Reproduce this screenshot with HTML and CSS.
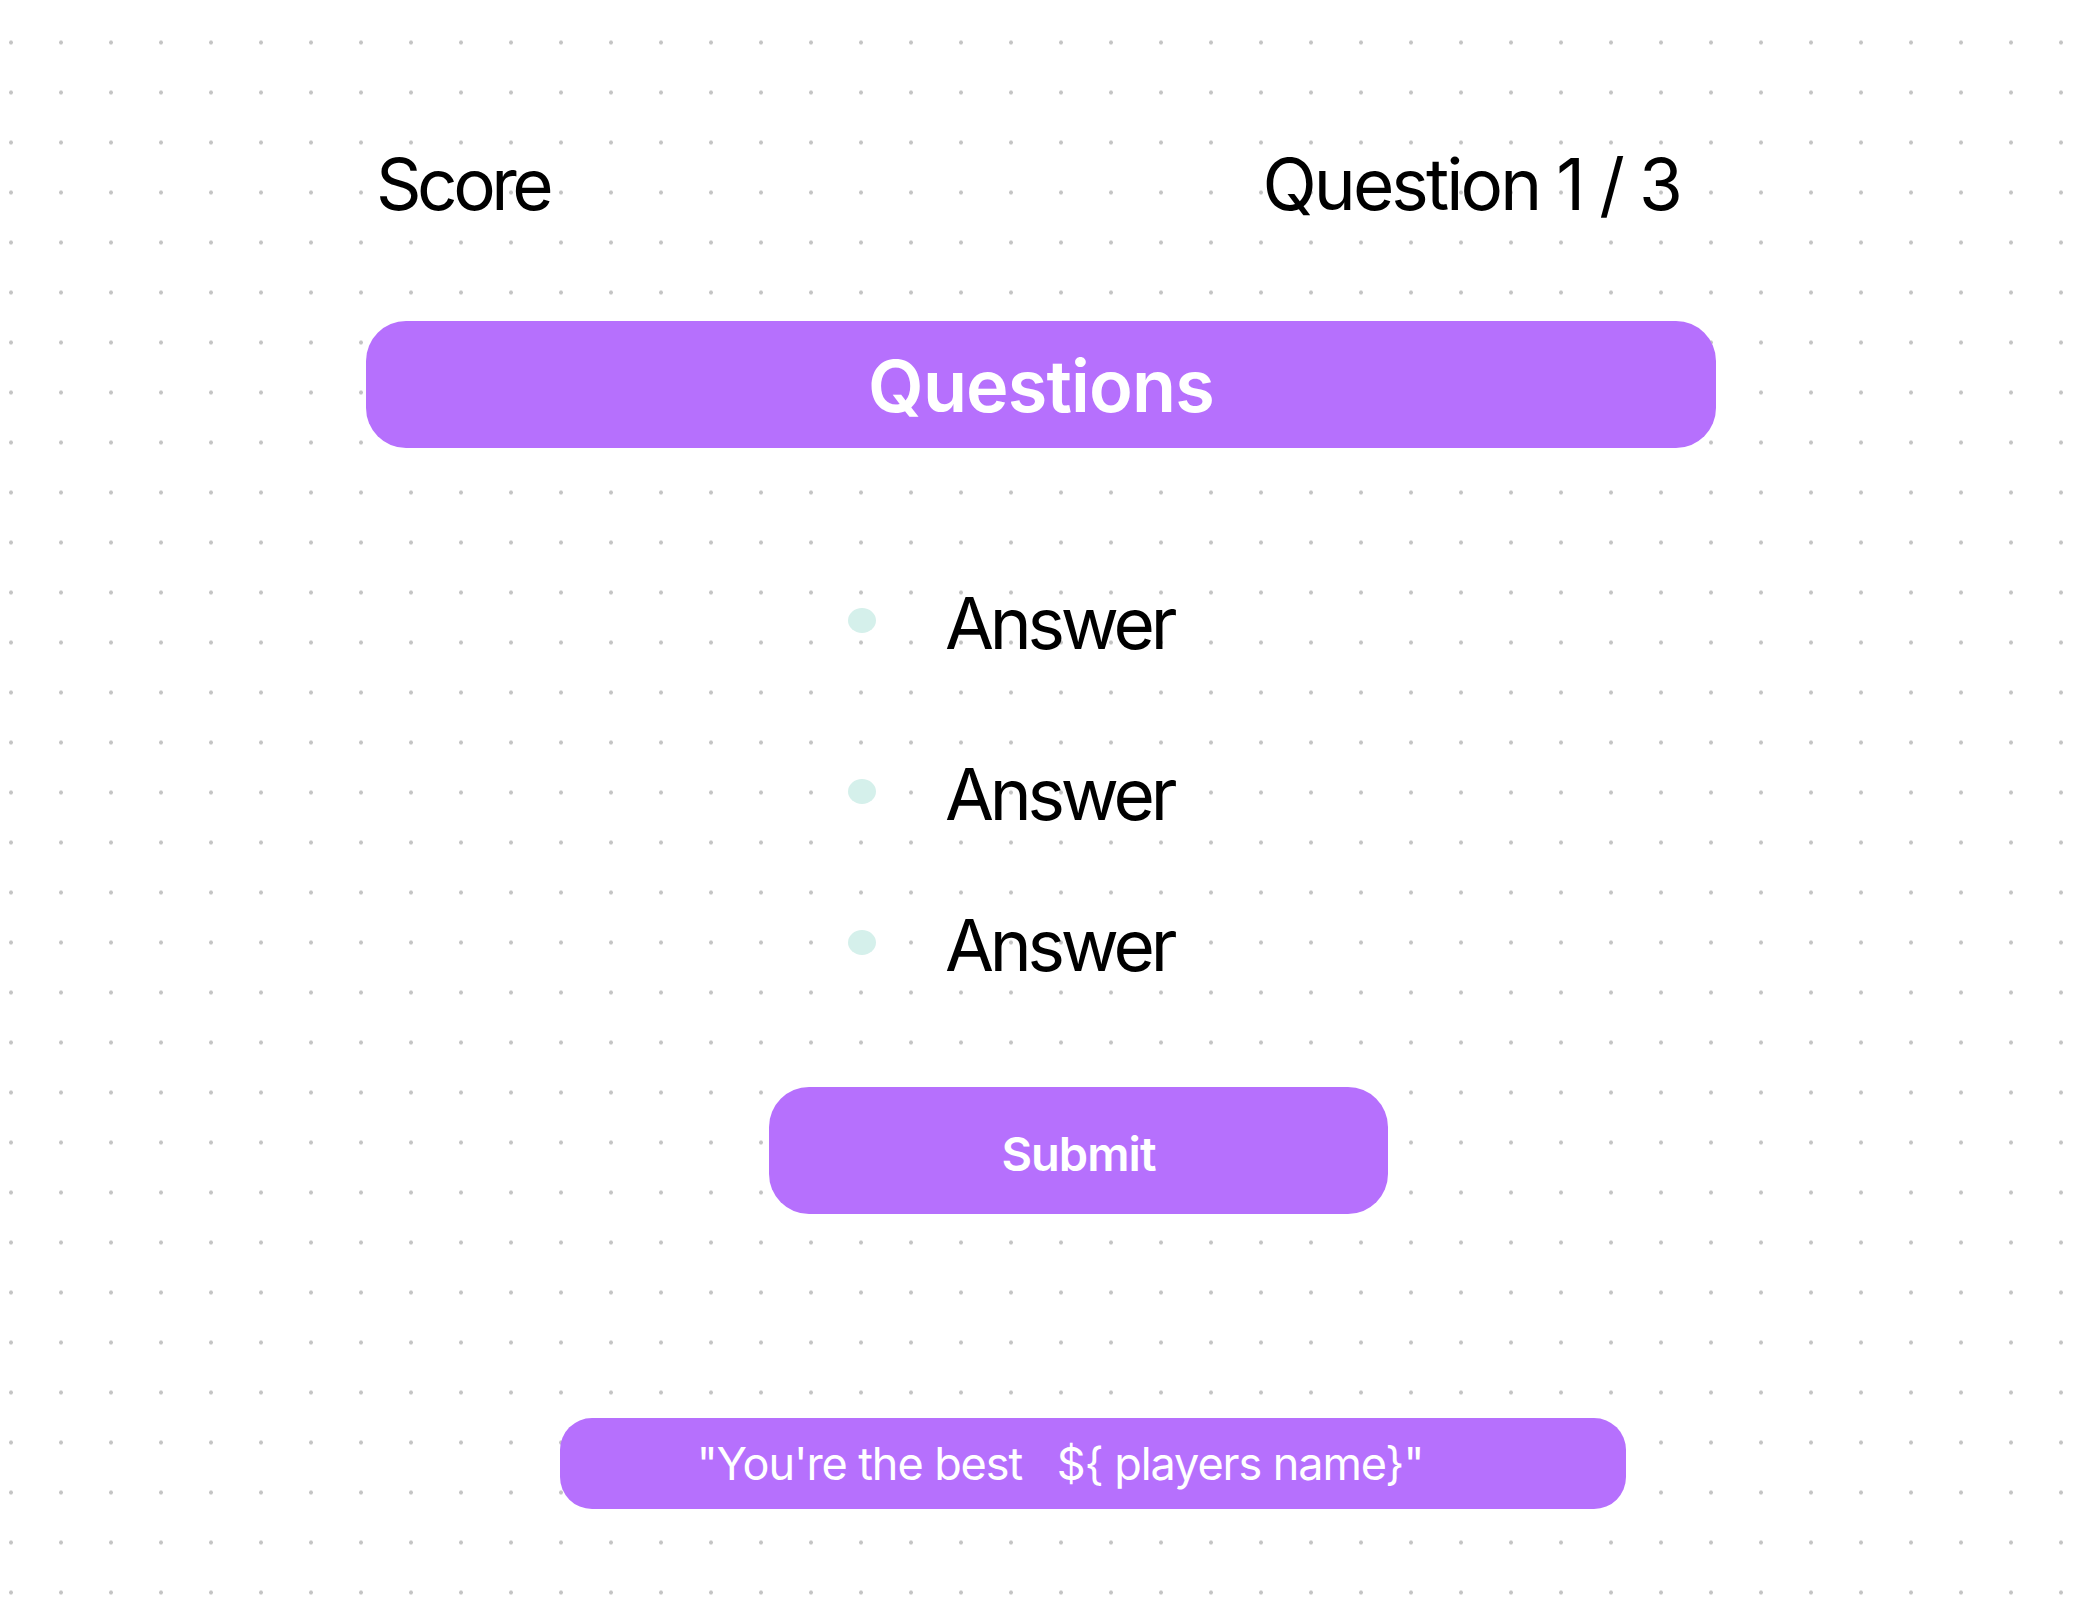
FILE: index.html
```html
<!DOCTYPE html>
<html lang="en">
<head>
<meta charset="utf-8">
<title>Quiz</title>
<link rel="stylesheet" href="styles.css">
</head>
<body>
<main class="quiz">
  <header class="quiz-header">
    <span class="quiz-score">Score</span>
    <span class="quiz-progress">Question 1 / 3</span>
  </header>
  <h1 class="title-bar">Questions</h1>
  <ul class="answers">
    <li class="answer answer--first"><span class="answer-dot"></span><span class="answer-text">Answer</span></li>
    <li class="answer"><span class="answer-dot"></span><span class="answer-text">Answer</span></li>
    <li class="answer"><span class="answer-dot"></span><span class="answer-text">Answer</span></li>
  </ul>
  <button class="submit" type="button">Submit</button>
  <div class="banner"><span class="banner-text">"You're the best   ${ players name}"</span></div>
</main>
</body>
</html>
```
FILE: styles.css
```css
html, body {
  margin: 0;
  padding: 0;
}

body {
  width: 2086px;
  height: 1622px;
  overflow: hidden;
  background-color: #ffffff;
  background-image: radial-gradient(circle at center, #c4c4c4 0, #c4c4c4 1.6px, rgba(196,196,196,0) 2.3px);
  background-size: 50px 50px;
  background-position: -14px 17.5px;
  font-family: Inter, "Noto Sans", "Liberation Sans", sans-serif;
  color: #000;
}

.quiz {
  width: 1350px;
  margin-left: 366px;
  padding-top: 148px;
  display: flex;
  flex-direction: column;
}

.quiz-header {
  display: flex;
  justify-content: space-between;
  padding: 0 36px 0 10px;
  height: 73px;
  font-size: 71px;
  line-height: 73px;
}

.quiz-score {
  letter-spacing: -0.063em;
}

.quiz-progress {
  letter-spacing: -0.041em;
}

.title-bar {
  margin: 100px 0 0;
  padding-top: 2px;
  box-sizing: border-box;
  height: 127px;
  border-radius: 40px;
  background: #b670fd;
  display: flex;
  align-items: center;
  justify-content: center;
  color: #ffffff;
  font-size: 72px;
  font-weight: 600;
  line-height: 1;
  letter-spacing: -0.012em;
}

.answers {
  list-style: none;
  margin: 139px 0 0;
  padding: 0 0 0 482px;
  display: flex;
  flex-direction: column;
}

.answer {
  display: flex;
  align-items: center;
  gap: 69px;
  height: 73px;
  font-size: 71px;
  line-height: 73px;
  letter-spacing: -0.059em;
}

.answer + .answer {
  margin-top: 78px;
}

.answer--first {
  margin-bottom: 20px;
}

.answer-dot {
  flex: none;
  width: 28px;
  height: 25px;
  border-radius: 50%;
  background: #d5f0eb;
  margin-bottom: 6px;
}

.submit {
  align-self: flex-start;
  margin: 105px 0 0 403px;
  width: 619px;
  height: 127px;
  border: 0;
  border-radius: 40px;
  background: #b670fd;
  color: #ffffff;
  font-family: Inter, "Noto Sans", "Liberation Sans", sans-serif;
  font-size: 47px;
  font-weight: 600;
  line-height: 1;
  letter-spacing: -0.02em;
  padding: 5px 0 0;
  cursor: pointer;
}

.banner {
  align-self: flex-start;
  box-sizing: border-box;
  margin: 204px 0 0 194px;
  width: 1066px;
  height: 91px;
  padding-right: 66px;
  border-radius: 32px;
  background: #b670fd;
  display: flex;
  align-items: center;
  justify-content: center;
  color: #ffffff;
  font-size: 45px;
  line-height: 1;
  letter-spacing: -0.024em;
}

.banner-text {
  white-space: pre;
}
```
